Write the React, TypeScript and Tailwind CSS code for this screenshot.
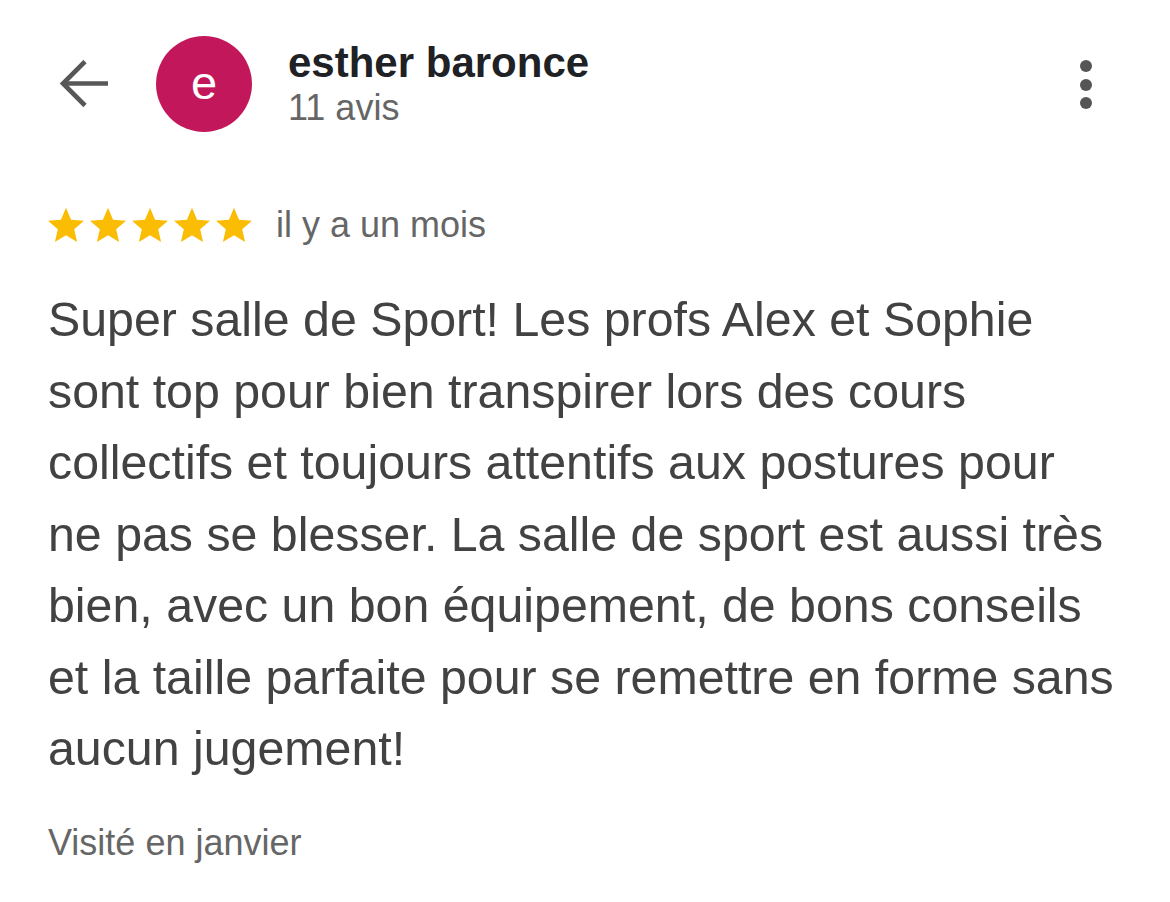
import React from "react";

const Star = () => (
  <svg width="36" height="36" viewBox="2 1.6 20 20" fill="#fbbc04">
    <path d="M12 17.27L18.18 21l-1.64-7.03L22 9.24l-7.19-.61L12 2 9.19 8.63 2 9.24l5.46 4.73L5.82 21z" />
  </svg>
);

const lines = [
  "Super salle de Sport! Les profs Alex et Sophie",
  "sont top pour bien transpirer lors des cours",
  "collectifs et toujours attentifs aux postures pour",
  "ne pas se blesser. La salle de sport est aussi très",
  "bien, avec un bon équipement, de bons conseils",
  "et la taille parfaite pour se remettre en forme sans",
  "aucun jugement!",
];

export default function App() {
  return (
    <div className="w-[1170px] h-[902px] bg-white overflow-hidden font-['Liberation_Sans',Arial,sans-serif]">
      {/* Header */}
      <div className="flex items-start pt-[36px] pl-[58px] pr-[78px]">
        <div className="w-[52px] h-[96px] flex items-center justify-center">
          <svg width="52" height="48" viewBox="0 0 52 48" fill="none" stroke="#575757" strokeWidth="4.6" strokeLinecap="butt" strokeLinejoin="miter">
            <path d="M50 23.5H6" />
            <path d="M27 1.5L5 23.5L27 45.5" />
          </svg>
        </div>
        <div className="ml-[46px] w-[96px] h-[96px] rounded-full bg-[#c2185b] flex items-center justify-center">
          <span className="text-white text-[47px] leading-none -mt-[4px]">e</span>
        </div>
        <div className="ml-[36px] mt-[3px] flex flex-col">
          <span className="text-[42px] leading-[48px] font-bold text-[#202124]">esther baronce</span>
          <span className="text-[36px] leading-[42px] text-[#666666]">11 avis</span>
        </div>
        <div className="ml-auto mt-[24px] flex flex-col items-center gap-[6.5px]">
          <span className="w-[12px] h-[12px] rounded-full bg-[#555555]" />
          <span className="w-[12px] h-[12px] rounded-full bg-[#555555]" />
          <span className="w-[12px] h-[12px] rounded-full bg-[#555555]" />
        </div>
      </div>

      {/* Rating row */}
      <div className="flex items-center mt-[75px] pl-[48px]">
        <div className="flex gap-[6px]">
          <Star />
          <Star />
          <Star />
          <Star />
          <Star />
        </div>
        <span className="ml-[24px] text-[36px] leading-[36px] text-[#666666]">il y a un mois</span>
      </div>

      {/* Body */}
      <div className="mt-[41px] pl-[48px] text-[48.3px] leading-[71.5px] text-[#424242] whitespace-nowrap">
        {lines.map((l) => (
          <div key={l}>{l}</div>
        ))}
      </div>

      <p className="mt-[40px] pl-[48px] text-[36px] leading-[36px] text-[#666666]">Visité en janvier</p>
    </div>
  );
}
